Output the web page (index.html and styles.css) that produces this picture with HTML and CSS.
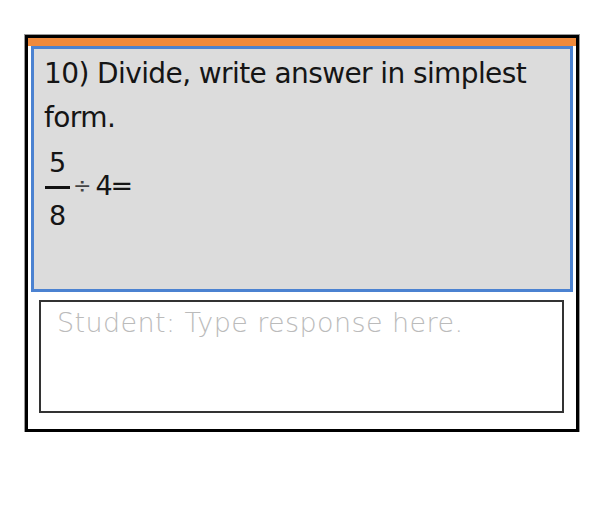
FILE: index.html
```html
<!DOCTYPE html>
<html lang="en">
  <head>
    <meta charset="UTF-8" />
    <meta name="viewport" content="width=device-width, initial-scale=1.0" />
    <title>Question 10</title>
    <link rel="stylesheet" href="styles.css">
  </head>
  <body>
    <div class="frame">
      <div class="frame-bar"></div>

      <section class="question">
        <p class="question-text">10) Divide, write answer in simplest form.</p>
        <div class="math">
          <span class="frac">
            <span class="num">5</span>
            <span class="den">8</span>
          </span>
          <span class="op">÷</span>
          <span class="rest">4=</span>
        </div>
      </section>

      <div class="response">
        <p class="placeholder">Student: Type response here.</p>
      </div>
    </div>
  </body>
</html>
```

FILE: styles.css
```css
/* Question card */

* {
  margin: 0;
  padding: 0;
  box-sizing: border-box;
}

body {
  font-family: 'DejaVu Sans', Verdana, sans-serif;
  color: #151515;
  background: #fff;
}

.frame {
  width: 554px;
  height: 397px;
  margin: 35px 0 0 25px;
  border: 3px solid #000;
  box-shadow: 0 0 0 1px #9a9a9a;
  display: flex;
  flex-direction: column;
}

.frame-bar {
  height: 8px;
  background: #f08a3c;
}

/* Question panel */
.question {
  height: 246px;
  margin: 0 3px;
  padding: 3px 10px 0 10px;
  background: #dcdcdc;
  border: 3px solid #4b82d1;
}

.question-text {
  font-size: 28px;
  line-height: 44px;
  letter-spacing: -0.6px;
}

.math {
  display: flex;
  align-items: center;
  font-size: 27px;
}

.frac {
  display: inline-flex;
  flex-direction: column;
  align-items: center;
  width: 25px;
  margin-left: 1px;
}

.num {
  line-height: 46px;
}

.den {
  line-height: 44px;
  padding-top: 5px;
  border-top: 3px solid #111;
  width: 100%;
  text-align: center;
}

.op {
  font-size: 22px;
  color: #444;
  margin: 0 4px 8px 3px;
}

.rest {
  letter-spacing: -2px;
  margin-bottom: 8px;
}

/* Response box */
.response {
  height: 113px;
  margin: 8px 12px 0 11px;
  padding: 5px 16px;
  border: 2px solid #333;
  background: #fff;
}

.placeholder {
  font-weight: 200;
  font-size: 27px;
  color: #bbb;
  letter-spacing: 0.4px;
}
```
